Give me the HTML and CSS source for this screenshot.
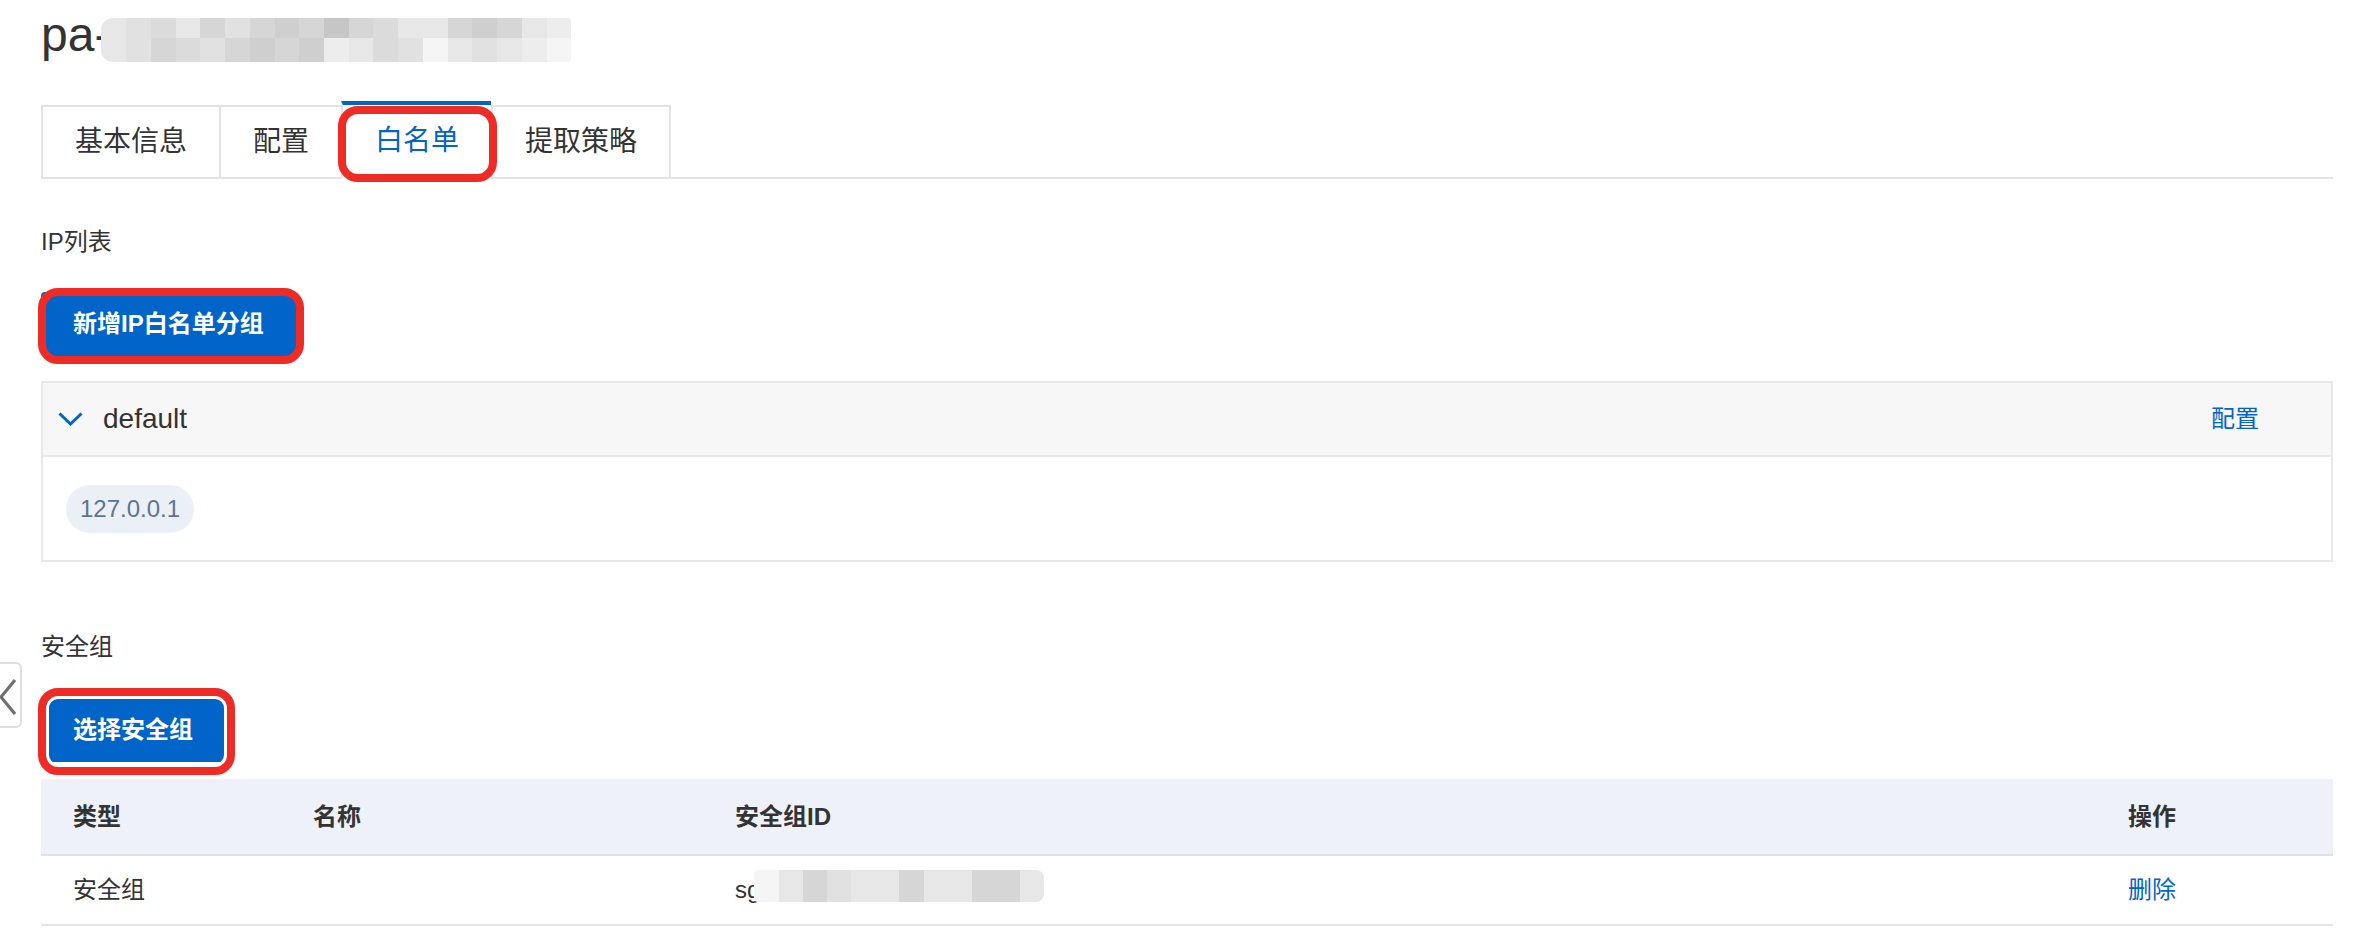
FILE: index.html
```html
<!DOCTYPE html>
<html lang="zh-CN">
<head>
<meta charset="utf-8">
<title>白名单</title>
<link rel="stylesheet" href="styles.css">
</head>
<body>
<div class="side-handle">
  <svg class="side-chevron" width="30" height="62" viewBox="0 0 30 62"><polyline points="25,16 11,33 25,50" fill="none" stroke="#707070" stroke-width="3.2"/></svg>
</div>
<main class="page">
  <h1 class="title">
    <span class="title-text">pa-</span>
    <span class="mosaic mosaic-title">
      <i class="g-f"></i><i class="g-e"></i><i class="g-d"></i><i class="g-f"></i><i class="g-c"></i><i class="g-e"></i><i class="g-c"></i><i class="g-b"></i><i class="g-c"></i><i class="g-a"></i><i class="g-c"></i><i class="g-d"></i><i class="g-f"></i><i class="g-f"></i><i class="g-c"></i><i class="g-b"></i><i class="g-c"></i><i class="g-f"></i><i class="g-g"></i>
      <i class="g-f"></i><i class="g-e"></i><i class="g-c"></i><i class="g-d"></i><i class="g-e"></i><i class="g-c"></i><i class="g-b"></i><i class="g-c"></i><i class="g-b"></i><i class="g-g"></i><i class="g-f"></i><i class="g-d"></i><i class="g-e"></i><i class="g-h"></i><i class="g-f"></i><i class="g-e"></i><i class="g-f"></i><i class="g-g"></i><i class="g-h"></i>
    </span>
  </h1>

  <nav class="tabs">
    <div class="tab">基本信息</div>
    <div class="tab">配置</div>
    <div class="tab active">白名单<span class="mark mark-tab"></span></div>
    <div class="tab last">提取策略</div>
    <div class="tab-fill"></div>
  </nav>

  <div class="section-title first">IP列表</div>
  <div class="btn-wrap btn-wrap-1">
    <button class="btn">新增IP白名单分组</button>
    <span class="mark mark-btn1"></span>
  </div>

  <section class="panel">
    <div class="panel-head">
      <svg class="chevron-down" width="25" height="14" viewBox="0 0 25 14"><polyline points="1.5,1.5 12.5,12 23.5,1.5" fill="none" stroke="#0064c8" stroke-width="3"/></svg>
      <span class="group-name">default</span>
      <a class="link head-link">配置</a>
    </div>
    <div class="panel-body">
      <span class="ip-tag">127.0.0.1</span>
    </div>
  </section>

  <div class="section-title second">安全组</div>
  <div class="btn-wrap btn-wrap-2">
    <button class="btn">选择安全组</button>
    <span class="mark mark-btn2"></span>
  </div>

  <div class="table">
    <div class="tr thead">
      <div class="td">类型</div>
      <div class="td">名称</div>
      <div class="td">安全组ID</div>
      <div class="td">操作</div>
    </div>
    <div class="tr tbody-row">
      <div class="td">安全组</div>
      <div class="td"></div>
      <div class="td sg-cell"><span class="sg-text">sg</span><span class="mosaic mosaic-row">
        <i class="g-h"></i><i class="g-f"></i><i class="g-c"></i><i class="g-e"></i><i class="g-f"></i><i class="g-f"></i><i class="g-c"></i><i class="g-f"></i><i class="g-f"></i><i class="g-c"></i><i class="g-c"></i><i class="g-f"></i>
      </span></div>
      <div class="td"><a class="link">删除</a></div>
    </div>
  </div>
</main>
</body>
</html>
```

FILE: styles.css
```css
* { box-sizing: border-box; }

html, body {
  margin: 0;
  height: 100%;
  background: #ffffff;
}

body {
  font-family: "Liberation Sans", "Noto Sans CJK SC", sans-serif;
  color: #333333;
  overflow: hidden;
  position: relative;
}

.page {
  padding: 11px 47px 0 41px;
}

/* left collapse handle (floats over page edge) */
.side-handle {
  position: absolute;
  left: -12px;
  top: 662px;
  width: 34px;
  height: 66px;
  border: 2px solid #dedede;
  border-radius: 6px;
  background: #ffffff;
}
.side-chevron { display: block; }

/* title */
.title {
  margin: 0;
  height: 48px;
  display: flex;
  align-items: flex-start;
  font-size: 48px;
  line-height: 48px;
  font-weight: 400;
  color: #333333;
}
.title-text { display: block; }

.mosaic {
  display: grid;
  overflow: hidden;
}
.mosaic i { display: block; }
.mosaic-title {
  margin-left: -9px;
  margin-top: 7px;
  width: 470px;
  height: 44px;
  grid-template-columns: repeat(19, 1fr);
  grid-template-rows: 20px 24px;
  border-radius: 12px 3px 3px 12px;
}
.mosaic-row {
  margin-left: -6px;
  margin-bottom: 8px;
  width: 290px;
  height: 32px;
  grid-template-columns: repeat(12, 1fr);
  border-radius: 4px 8px 8px 4px;
}
.g-a { background: #c6c6c6; }
.g-b { background: #cfcfcf; }
.g-c { background: #d6d6d6; }
.g-d { background: #dbdbdb; }
.g-e { background: #e1e1e1; }
.g-f { background: #e7e7e7; }
.g-g { background: #ededed; }
.g-h { background: #f5f5f5; }

/* tabs */
.tabs {
  margin-top: 42px;
  height: 78px;
  display: flex;
  align-items: flex-end;
}
.tab {
  height: 74px;
  padding: 0 32px;
  border: 2px solid #e4e4e4;
  border-right: 0;
  display: flex;
  align-items: center;
  font-size: 28px;
  line-height: 28px;
  color: #333333;
  white-space: nowrap;
}
.tab.last { border-right: 2px solid #e4e4e4; }
.tab.active {
  position: relative;
  height: 78px;
  border-top: 4px solid #0064c8;
  border-bottom-color: #ffffff;
  color: #0064c8;
}
.tab-fill {
  flex: 1;
  height: 0;
  border-bottom: 2px solid #e4e4e4;
}

/* red annotation boxes */
.mark {
  position: absolute;
  border: 8px solid #ef2b26;
  border-radius: 20px;
  pointer-events: none;
}
.mark-tab {
  left: -5px;
  top: 1px;
  width: 159px;
  height: 76px;
}
.mark-btn1 {
  left: -3px;
  top: -4px;
  width: 266px;
  height: 76px;
}
.mark-btn2 {
  left: -3px;
  top: -10px;
  width: 197px;
  height: 87px;
  box-shadow: inset 0 0 0 3px #ffffff;
}

/* section labels */
.section-title {
  font-size: 24px;
  line-height: 24px;
  height: 24px;
  color: #333333;
}
.section-title.first { margin-top: 51px; }
.section-title.second { margin-top: 73px; }

/* buttons */
.btn-wrap {
  position: relative;
  display: flex;
  width: fit-content;
}
.btn-wrap-1 { margin-top: 38px; }
.btn-wrap-2 { margin-top: 39px; }
.btn {
  height: 64px;
  padding: 0 32px;
  border: 0;
  border-radius: 4px;
  background: #0064c8;
  color: #ffffff;
  font-family: inherit;
  font-size: 24px;
  font-weight: 700;
  line-height: 24px;
  white-space: nowrap;
}

/* whitelist panel */
.panel {
  margin-top: 25px;
  border: 2px solid #e8e8e8;
}
.panel-head {
  height: 74px;
  padding: 0 72px 0 15px;
  background: #f7f7f7;
  border-bottom: 2px solid #e8e8e8;
  display: flex;
  align-items: center;
}
.chevron-down { display: block; }
.group-name {
  margin-left: 20px;
  font-size: 28px;
  line-height: 28px;
  color: #333333;
}
.link {
  color: #0064c8;
  font-size: 24px;
  line-height: 24px;
  cursor: pointer;
}
.head-link { margin-left: auto; }
.panel-body {
  height: 103px;
  padding: 28px 23px 0;
}
.ip-tag {
  display: inline-flex;
  align-items: center;
  height: 48px;
  padding: 0 14px;
  border-radius: 24px;
  background: #ebf0f6;
  color: #5a7591;
  font-size: 24px;
  line-height: 24px;
}

/* security group table */
.table { margin-top: 17px; }
.tr {
  display: grid;
  grid-template-columns: 240px 422px 1fr 237px;
  align-items: center;
}
.thead {
  height: 77px;
  background: #eef1f8;
  border-bottom: 2px solid #dfe2e8;
  font-weight: 700;
}
.tbody-row {
  height: 70px;
  border-bottom: 2px solid #e6e6e6;
}
.td {
  padding-left: 32px;
  font-size: 24px;
  line-height: 24px;
  color: #333333;
  white-space: nowrap;
}
.sg-cell {
  display: flex;
  align-items: center;
}
.sg-text { display: block; }
```
